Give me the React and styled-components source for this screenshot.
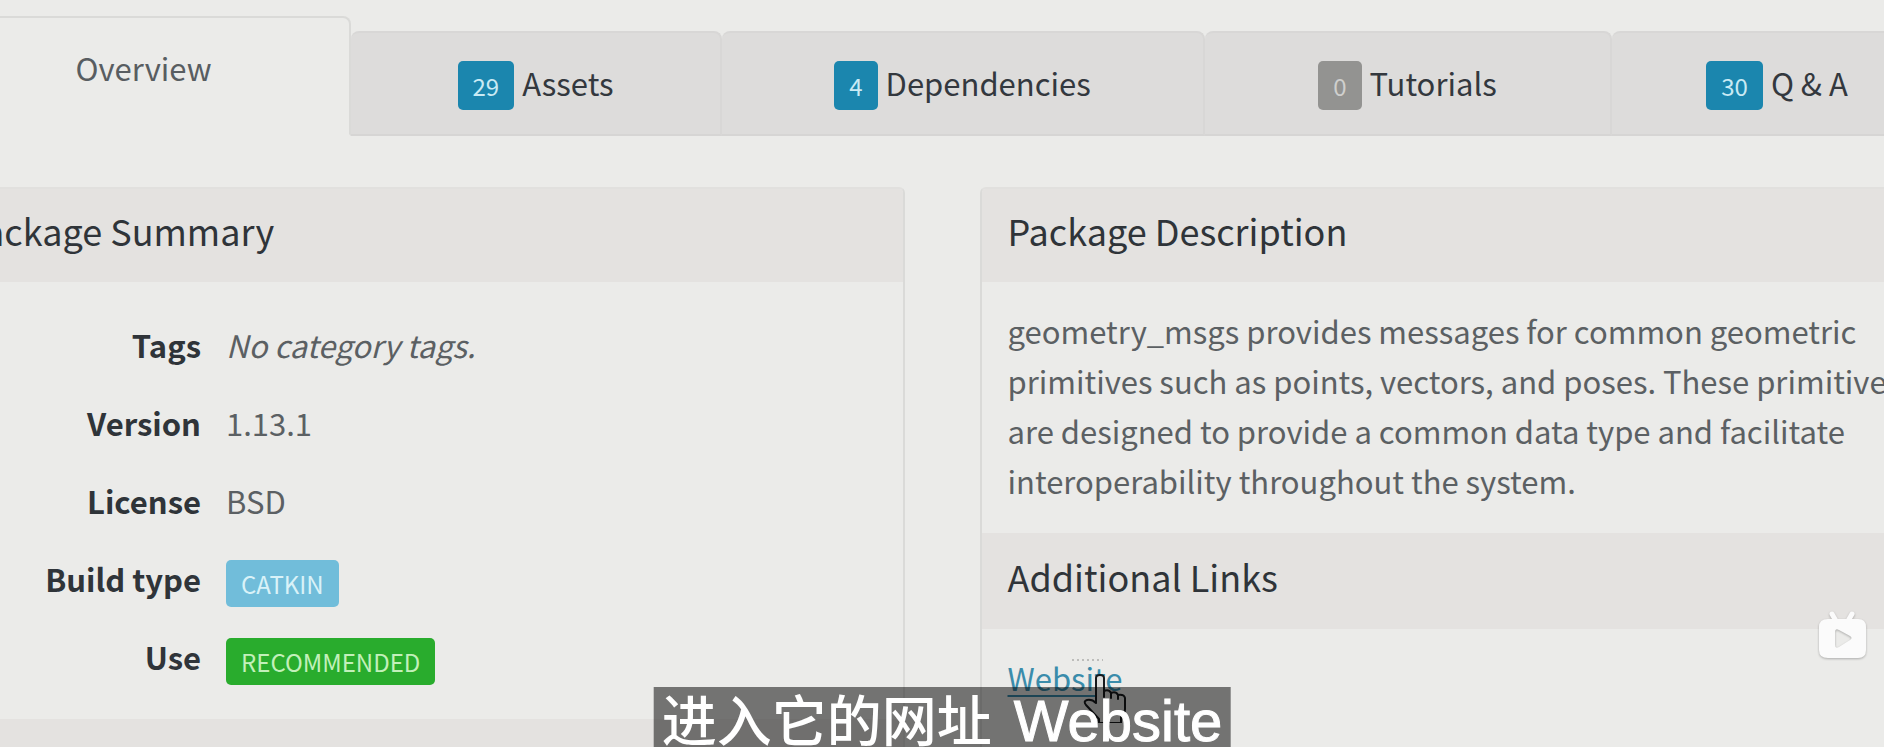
import React from "react";
import styled, { createGlobalStyle } from "styled-components";

const GlobalStyle = createGlobalStyle`
  * { box-sizing: border-box; }
  html, body { margin: 0; height: 100%; }
  body {
    overflow: hidden;
    background: #ebebe9;
    color: #5b6063;
    font: 31px/50px "Noto Sans CJK SC", "Noto Sans", sans-serif;
  }
`;

const Page = styled.main`
  position: relative;
  height: 100vh;
  overflow: hidden;
  padding-top: 16px;
`;

const Tabs = styled.nav`
  display: grid;
  grid-template-columns: 415fr 371fr 483fr 407fr 332fr;
  align-items: end;
  margin: 0 -60px 51px -64px;
`;

const Tab = styled.button`
  display: flex;
  align-items: flex-start;
  justify-content: center;
  gap: 8px;
  height: ${(p) => (p.$active ? 120 : 105)}px;
  padding: 28px 0 0;
  border: 2px solid ${(p) => (p.$active ? "#dadad8" : "#d8d7d6")};
  border-left-width: ${(p) => (p.$active ? 2 : 0)}px;
  border-bottom-color: ${(p) => (p.$active ? "transparent" : "#d6d5d4")};
  border-radius: 8px 8px 0 0;
  background: ${(p) => (p.$active ? "#ebebe9" : "#dddcdb")};
  color: ${(p) => (p.$active ? "#585d61" : "#33383e")};
  font: inherit;
  line-height: 44px;
  white-space: nowrap;
  cursor: pointer;
`;

const Label = styled.span`
  display: inline-block;
  flex: none;
  padding: 0 15px;
  border-radius: 5px;
  background: ${(p) => p.$color};
  color: ${(p) => p.$text || "#c9eaf4"};
  font-size: 24px;
  line-height: ${(p) => (p.$tall ? 49 : 47)}px;
  vertical-align: middle;
`;

const Columns = styled.div`
  display: grid;
  grid-template-columns: 969fr 963fr;
  gap: 75px;
  margin: 0 -59px 0 -65px;
`;

const Panel = styled.section`
  border: 2px solid #dadad8;
  border-top-color: #e1e0de;
  border-radius: 6px;
  overflow: hidden;
`;

const PanelTitle = styled.h2`
  margin: 0;
  padding: ${(p) => (p.$divider ? "18px 26px 28px" : "16px 26px 27px")};
  background: #e4e2e0;
  color: #2f3439;
  font-size: 36px;
  font-weight: 400;
  line-height: 50px;
`;

const PanelBody = styled.div`
  padding: 24px 26px ${(p) => (p.$compact ? 23 : 27)}px;
`;

const Facts = styled.dl`
  display: grid;
  grid-template-columns: 238px 1fr;
  column-gap: 25px;
  margin: 0;
  line-height: 78px;
`;

const Term = styled.dt`
  color: #2f3439;
  font-weight: 700;
  text-align: right;
`;

const Value = styled.dd`
  height: 78px;
  margin: 0;
`;

const Text = styled.p`
  margin: 0;
`;

const Link = styled.a`
  color: #3a8cab;
  text-decoration: underline;
  text-decoration-thickness: 2px;
  text-underline-offset: 4px;
`;

const Pointer = styled.svg`
  position: absolute;
  left: 1072px;
  top: 657px;
`;

const Caption = styled.p`
  position: fixed;
  left: 50%;
  bottom: 0;
  height: 60px;
  margin: 0;
  padding: 0 8px;
  transform: translateX(-50%);
  background: rgba(0, 0, 0, 0.51);
  color: #fff;
  font: 500 55px/60px "Noto Sans CJK SC", sans-serif;
  white-space: pre;
`;

const Latin = styled.span`
  margin-left: 6px;
  font-family: "Liberation Sans", sans-serif;
  font-size: 58px;
  font-weight: 400;
  line-height: 1;
  -webkit-text-stroke: 1px #fff;
`;

const PlayerButton = styled.button`
  position: fixed;
  right: 15px;
  bottom: 86px;
  padding: 0;
  border: 0;
  background: none;
  line-height: 0;
  cursor: pointer;
`;

const tabs = [
  { name: "Assets", count: 29, color: "#1b86ae" },
  { name: "Dependencies", count: 4, color: "#1b86ae" },
  { name: "Tutorials", count: 0, color: "#939391", text: "#cfcfcd" },
  { name: "Q & A", count: 30, color: "#1b86ae" },
];

export default function App() {
  return (
    <Page>
      <GlobalStyle />
      <Tabs>
        <Tab $active>Overview</Tab>
        {tabs.map((t) => (
          <Tab key={t.name}>
            <Label $tall $color={t.color} $text={t.text}>{t.count}</Label>
            <span>{t.name}</span>
          </Tab>
        ))}
      </Tabs>
      <Columns>
        <Panel>
          <PanelTitle>Package Summary</PanelTitle>
          <PanelBody $compact>
            <Facts>
              <Term>Tags</Term>
              <Value><em>No category tags.</em></Value>
              <Term>Version</Term>
              <Value>1.13.1</Value>
              <Term>License</Term>
              <Value>BSD</Value>
              <Term>Build type</Term>
              <Value><Label $color="#71bdda" $text="#d9f2f8">CATKIN</Label></Value>
              <Term>Use</Term>
              <Value><Label $color="#29ac2d" $text="#c2f0ba">RECOMMENDED</Label></Value>
            </Facts>
          </PanelBody>
          <PanelTitle as="div" $divider>&nbsp;</PanelTitle>
        </Panel>
        <Panel>
          <PanelTitle>Package Description</PanelTitle>
          <PanelBody>
            <Text>
              geometry_msgs provides messages for common geometric primitives such as
              points, vectors, and poses. These primitives are designed to provide a
              common data type and facilitate interoperability throughout the system.
            </Text>
          </PanelBody>
          <PanelTitle $divider>Additional Links</PanelTitle>
          <PanelBody>
            <Link href="#website">Website</Link>
          </PanelBody>
        </Panel>
      </Columns>
      <Pointer width="60" height="66" viewBox="0 0 60 66" aria-hidden="true">
        <path d="M0 3H31" stroke="#bdbdbb" strokeWidth="2" strokeDasharray="2 3" />
        <path
          d="M24 46V21q0-3 4-3t4 3v13q5-2 7 2 5-2 7 2 6-1 7 3v11q0 5-4 8v6H27v-4L14 48q-3-4 1-5 5-1 9 3z"
          fill="#dededc"
          stroke="#17191c"
          strokeWidth="2"
          strokeLinejoin="round"
        />
        <path d="M32 34v6M39 36v5M46 38v4" stroke="#17191c" strokeWidth="2" strokeLinecap="round" />
      </Pointer>
      <Caption>进入它的网址<Latin> Website</Latin></Caption>
      <PlayerButton aria-label="Play">
        <svg width="54" height="54" viewBox="0 0 54 54">
          <g style={{ filter: "drop-shadow(0 1px 1px #0004)" }}>
            <path d="M17 7l4 7M37 7l-4 7" stroke="#fbfbfb" strokeWidth="5" strokeLinecap="round" />
            <path
              fillRule="evenodd"
              fill="#fbfbfb"
              d="M13 12H43Q51 12 51 20V43Q51 51 43 51H13Q4 51 4 43V20Q4 12 13 12zM20 25V38q0 4 4 2l11-7q3-2 0-4l-11-6q-4-2-4 2z"
            />
          </g>
        </svg>
      </PlayerButton>
    </Page>
  );
}
